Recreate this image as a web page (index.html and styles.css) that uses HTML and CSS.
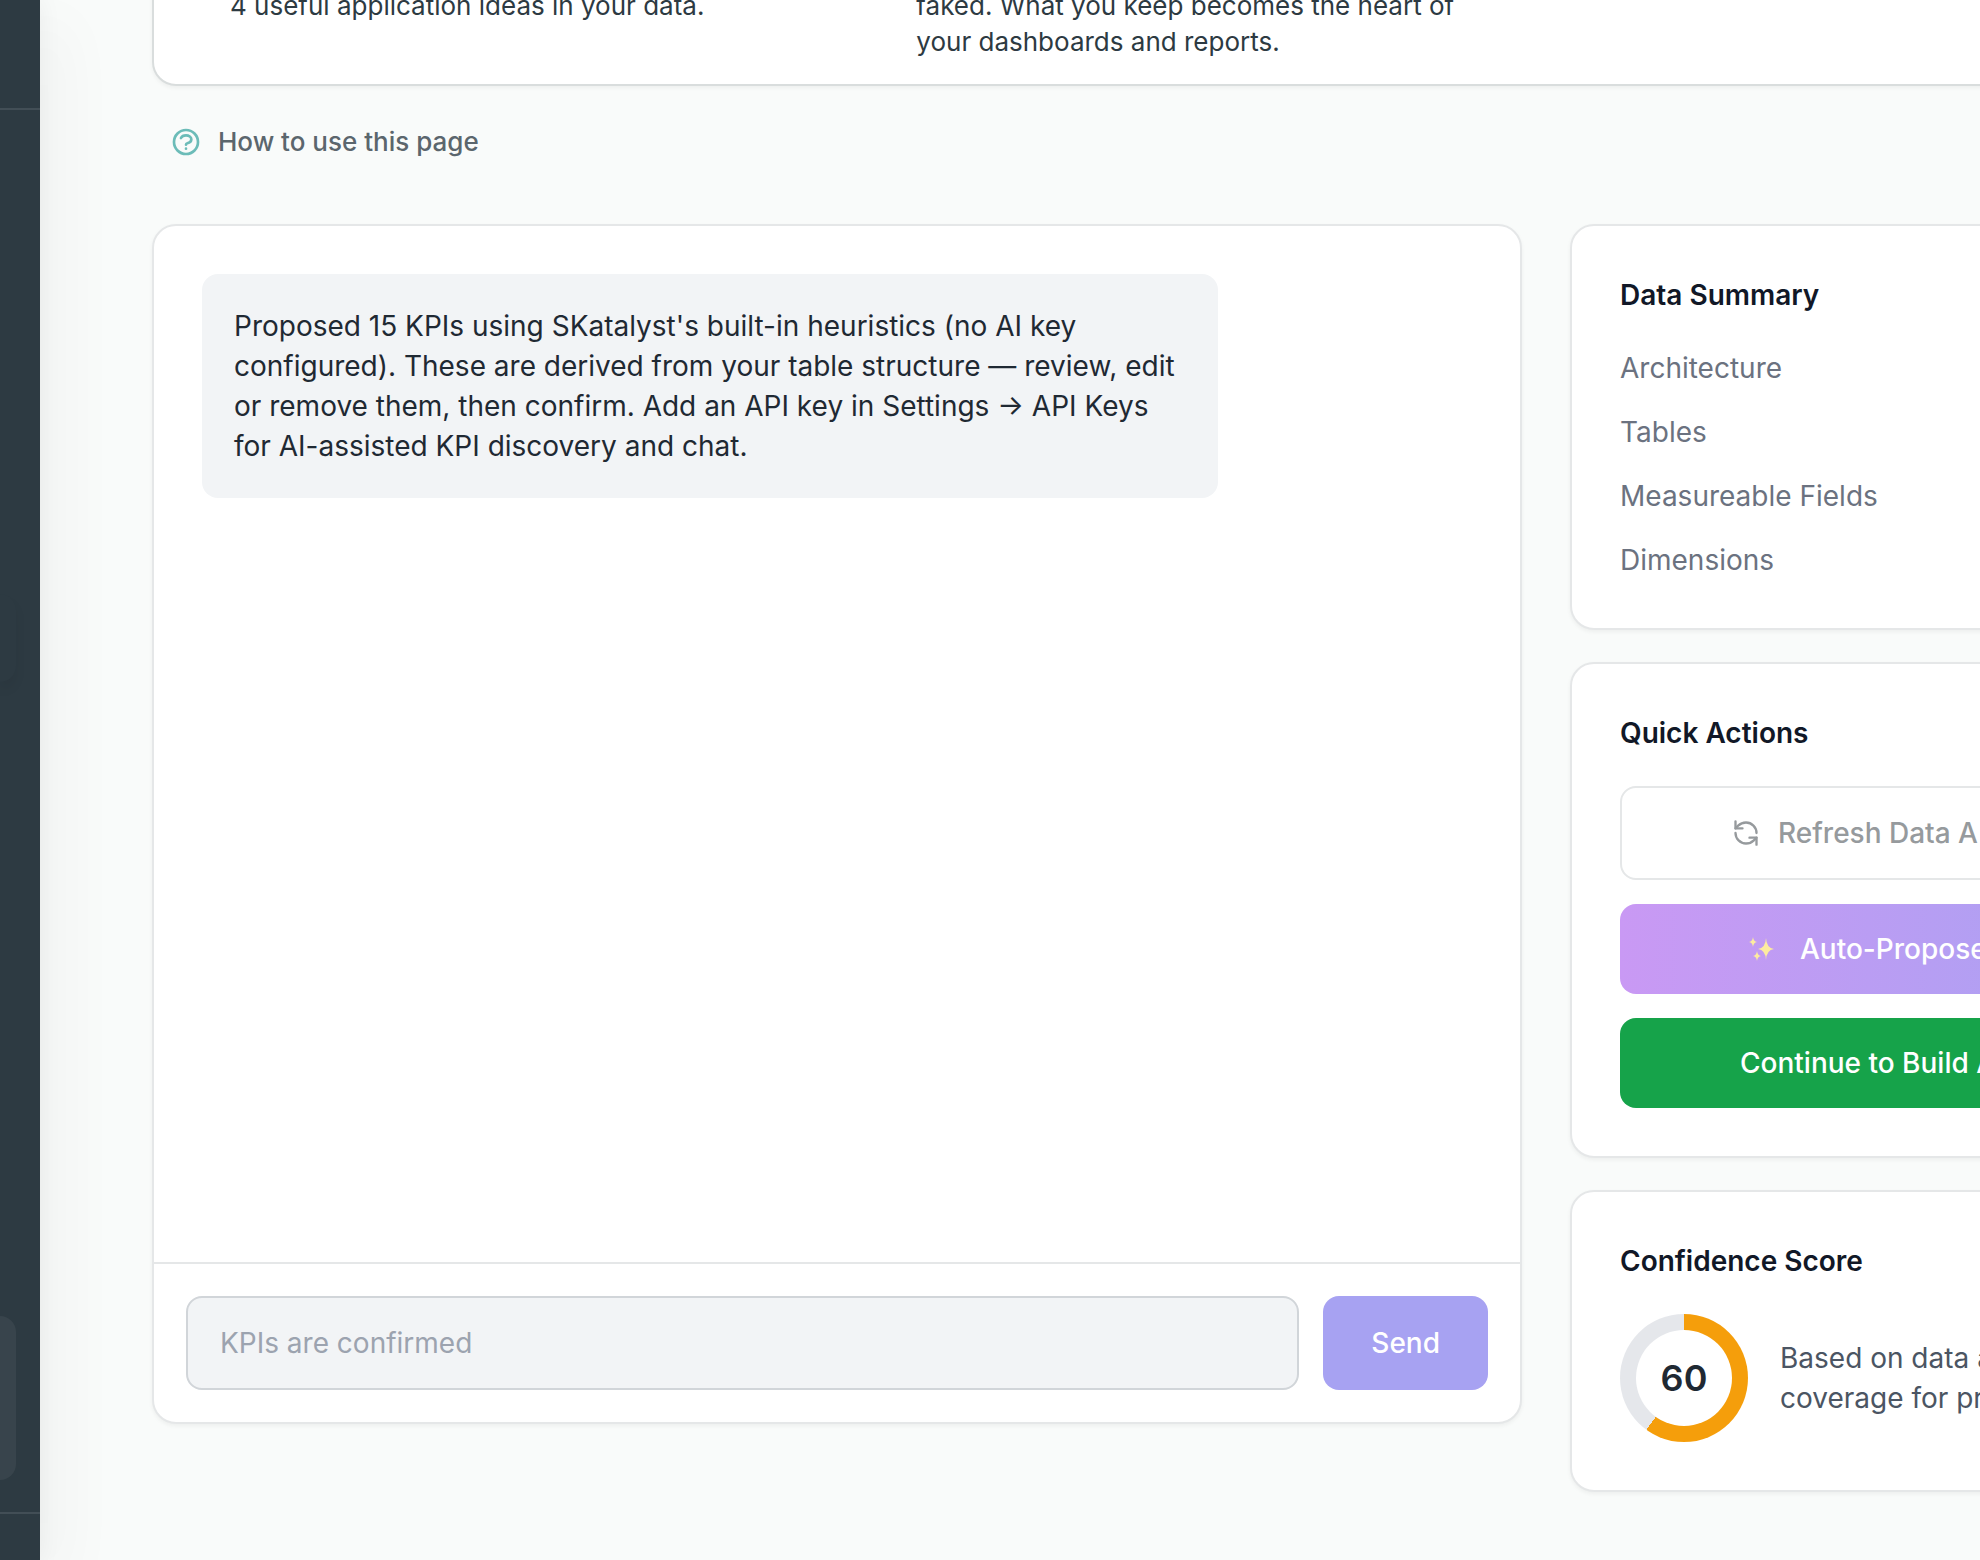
FILE: index.html
```html
<!DOCTYPE html>
<html lang="en">
<head>
    <meta charset="UTF-8">
    <meta name="viewport" content="width=device-width, initial-scale=1.0">
    <title>KPI Discovery</title>
    <link rel="stylesheet" href="styles.css">
</head>

<body>
    <div class="app">
        <aside class="sidebar">
            <div class="sidebar-header"></div>
            <nav class="sidebar-nav">
                <div class="nav-active"></div>
            </nav>
            <div class="sidebar-panel"></div>
            <div class="sidebar-footer"></div>
        </aside>

        <main class="main">
            <!-- intro steps -->
            <section class="card intro">
                <p>4 useful application ideas in your data.</p>
                <p>faked. What you keep becomes the heart of<br>your dashboards and reports.</p>
            </section>

            <button type="button" class="help-toggle">
                <svg viewBox="0 0 24 24" width="32" height="32" aria-hidden="true">
                    <path d="M8.228 9c.549-1.165 2.03-2 3.772-2 2.21 0 4 1.343 4 3 0 1.4-1.278 2.575-3.006 2.907-.542.104-.994.54-.994 1.093m0 3h.01"/>
                    <circle cx="12" cy="12" r="9"/>
                </svg>
                How to use this page
            </button>

            <div class="workspace">
                <!-- chat -->
                <section class="card chat">
                    <div class="messages">
                        <p class="message">Proposed 15 KPIs using SKatalyst's built-in heuristics (no AI key configured). These are derived from your table structure — review, edit or remove them, then confirm. Add an API key in Settings → API Keys for AI-assisted KPI discovery and chat.</p>
                    </div>
                    <form class="chat-form">
                        <input type="text" id="chatInput" aria-label="Message" placeholder="KPIs are confirmed" disabled>
                        <button type="submit" class="send" disabled>Send</button>
                    </form>
                </section>

                <div class="side">
                    <section class="card panel">
                        <h2>Data Summary</h2>
                        <ul class="summary">
                            <li>Architecture</li>
                            <li>Tables</li>
                            <li>Measureable Fields</li>
                            <li>Dimensions</li>
                        </ul>
                    </section>

                    <section class="card panel">
                        <h2>Quick Actions</h2>
                        <div class="actions">
                            <button type="button" class="action refresh" disabled>
                                <svg viewBox="0 0 24 24" width="28" height="28" aria-hidden="true">
                                    <path d="M21 12a9 9 0 0 0-9-9 9.75 9.75 0 0 0-6.74 2.74L3 8"/>
                                    <path d="M3 2v6h6"/>
                                    <path d="M3 12a9 9 0 0 0 9 9 9.75 9.75 0 0 0 6.74-2.74L21 16"/>
                                    <path d="M15 16h6v6"/>
                                </svg>
                                Refresh Data A
                            </button>
                            <button type="button" class="action propose" disabled>
                                <svg viewBox="0 0 28 28" width="28" height="28" aria-hidden="true">
                                    <path d="M18 3Q18.500 13 26 14Q18.500 15 18 25Q17.500 15 10 14Q17.500 13 18 3Z"/>
                                    <path d="M5 2Q5.500 6.500 9 7Q5.500 7.500 5 12Q4.500 7.500 1 7Q4.500 6.500 5 2Z"/>
                                    <path d="M9 16Q9.500 20.500 13 21Q9.500 21.500 9 26Q8.500 21.500 5 21Q8.500 20.500 9 16Z"/>
                                </svg>
                                Auto-Propose
                            </button>
                            <button type="button" class="action continue">Continue to Build A</button>
                        </div>
                    </section>

                    <section class="card panel">
                        <h2>Confidence Score</h2>
                        <div class="score">
                            <div class="ring"><span>60</span></div>
                            <p>Based on data a<br>coverage for pr</p>
                        </div>
                    </section>
                </div>
            </div>
        </main>
    </div>
</body>
</html>
```

FILE: styles.css
```css
* {
    box-sizing: border-box;
}
body {
    margin: 0;
    font-family: Inter, "Liberation Sans", sans-serif;
    font-size: 28px;
    line-height: 40px;
    color: #1f2933;
    background-color: #f9fbfa;
    overflow: hidden;
}
h2, p, ul {
    margin: 0;
    padding: 0;
}
button, input {
    font-family: inherit;
    font-size: 28px;
    line-height: 42px;
    margin: 0;
}
svg {
    flex: none;
    fill: none;
    stroke: currentColor;
    stroke-width: 2;
    stroke-linecap: round;
    stroke-linejoin: round;
}
.app {
    display: flex;
    height: 100vh;
}

/* sidebar */
.sidebar {
    display: flex;
    flex-direction: column;
    flex: none;
    width: 40px;
    background-color: #2d3a42;
    box-shadow: 0 0 24px rgba(0, 0, 0, 0.06), 24px 24px 60px rgba(0, 0, 0, 0.04);
}
.sidebar-header {
    height: 110px;
    border-bottom: 2px solid #424e56;
}
.sidebar-nav {
    flex: 1;
    padding-top: 484px;
}
.nav-active {
    width: 16px;
    height: 88px;
    border-radius: 0 16px 16px 0;
    background-color: #2d3a42;
    box-shadow: 0 8px 12px rgba(0, 0, 0, 0.06);
}
.sidebar-panel {
    width: 16px;
    height: 164px;
    margin-bottom: 32px;
    border-radius: 0 20px 20px 0;
    background-color: #38444c;
}
.sidebar-footer {
    height: 48px;
    border-top: 2px solid #424e56;
}

/* content runs past the right edge of the window */
.main {
    flex: 1;
    min-width: 0;
    margin-right: -251px;
    padding-left: 112px;
}
.card {
    background-color: #fff;
    border: 2px solid #e5e7e8;
    border-radius: 24px;
    box-shadow: 0 2px 4px rgba(0, 0, 0, 0.05);
}
.intro {
    display: grid;
    grid-template-columns: repeat(3, 1fr);
    gap: 64px;
    margin-top: -38px;
    padding: 24px 40px;
    border-color: #d9dddd;
    font-size: 26px;
    line-height: 36px;
    color: #2d3a42;
}
.intro p {
    padding-left: 36px;
    white-space: nowrap;
}
.help-toggle {
    display: flex;
    align-items: center;
    gap: 16px;
    margin: 35px 0 61px;
    padding: 0 18px;
    border: none;
    background: none;
    font-size: 26px;
    font-weight: 500;
    color: #5b666d;
}
.help-toggle svg {
    color: #6cbcb8;
}
.workspace {
    display: grid;
    grid-template-columns: repeat(3, 1fr);
    gap: 48px;
    align-items: start;
}

/* chat */
.chat {
    grid-column: span 2;
    display: flex;
    flex-direction: column;
    height: 1200px;
}
.messages {
    flex: 1;
    padding: 48px;
}
.message {
    width: 80%;
    padding: 32px;
    border-radius: 16px;
    background-color: #f2f4f6;
}
.chat-form {
    display: flex;
    gap: 24px;
    padding: 32px;
    border-top: 2px solid #e5e7e8;
}
.chat-form input {
    flex: 1;
    min-width: 0;
    padding: 24px 32px;
    border: 2px solid #d1d5d9;
    border-radius: 16px;
    background-color: #f2f4f6;
}
.chat-form input::placeholder {
    color: #9ca3af;
}
.send {
    padding: 0 48px;
    border: none;
    border-radius: 16px;
    font-weight: 500;
    color: #fff;
    background-color: #a7a2f2;
}

/* right column */
.side {
    display: flex;
    flex-direction: column;
    gap: 32px;
}
.panel {
    padding: 48px;
}
.panel h2 {
    margin-bottom: 32px;
    font-size: 28px;
    line-height: 42px;
    font-weight: 600;
    color: #111827;
}
.summary {
    display: flex;
    flex-direction: column;
    gap: 24px;
    list-style: none;
    color: #6b7280;
}
.actions {
    display: flex;
    flex-direction: column;
    gap: 24px;
}
.action {
    display: flex;
    align-items: center;
    padding: 24px 0;
    border: none;
    border-radius: 16px;
    font-weight: 500;
    white-space: nowrap;
    color: #fff;
}
.refresh {
    gap: 18px;
    padding-left: 110px;
    border: 2px solid #e5e7e8;
    background-color: #fff;
    color: #969a9d;
}
.propose {
    gap: 24px;
    padding-left: 128px;
    background: linear-gradient(to right, #c999f4, #a7a2f2);
}
.propose svg {
    fill: #fdeba0;
    stroke: none;
}
.continue {
    padding-left: 120px;
    background-color: #16a34a;
}
.score {
    display: flex;
    align-items: center;
    gap: 32px;
    color: #4b5563;
}
.ring {
    display: grid;
    place-items: center;
    flex: none;
    width: 128px;
    height: 128px;
    border-radius: 50%;
    background: conic-gradient(#f59e0b 60%, #e5e7eb 0);
}
.ring span {
    width: 96px;
    height: 96px;
    border-radius: 50%;
    background-color: #fff;
    font-size: 36px;
    line-height: 96px;
    font-weight: 600;
    text-align: center;
    color: #1f2933;
}
```
